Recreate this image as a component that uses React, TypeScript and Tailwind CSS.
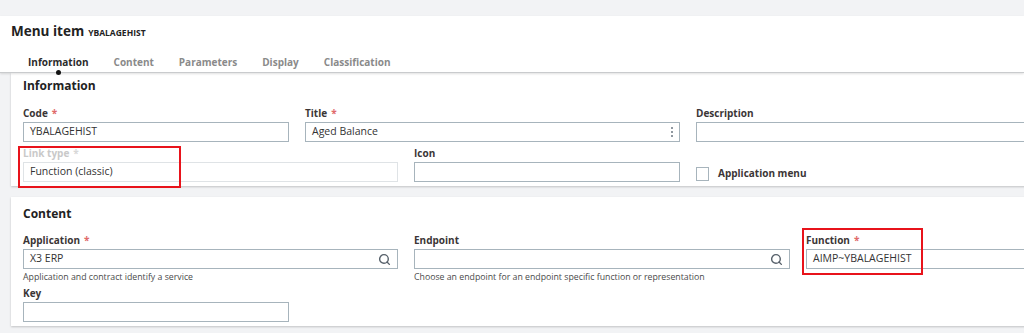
import { Search } from "lucide-react";

const font = { fontFamily: '"Open Sans", "Liberation Sans", sans-serif' };

function Label({ text, required, muted }: { text: string; required?: boolean; muted?: boolean }) {
  return (
    <div className={`h-[18px] text-[10px] font-bold leading-[18px] ${muted ? "text-[#c9c9c9]" : "text-[#3b3636]"}`}>
      {text}
      {required && <span className={`ml-1 ${muted ? "text-[#d8d8d8]" : "text-[#e06a6a]"}`}>*</span>}
    </div>
  );
}

function Input({
  value,
  width,
  muted,
  icon,
}: {
  value?: string;
  width: string;
  muted?: boolean;
  icon?: "search" | "more";
}) {
  return (
    <div
      className={`flex h-[20px] items-center justify-between border px-[6px] text-[10.5px] text-[#333] ${width} ${
        muted ? "border-[#dfe3e6]" : "border-[#a7b4bc]"
      }`}
    >
      <span>{value}</span>
      {icon === "search" && <Search size={13} strokeWidth={2.6} className="text-[#56606a]" />}
      {icon === "more" && (
        <span className="flex flex-col gap-[2px]">
          <span className="h-[2px] w-[2px] rounded-full bg-[#6b7680]" />
          <span className="h-[2px] w-[2px] rounded-full bg-[#6b7680]" />
          <span className="h-[2px] w-[2px] rounded-full bg-[#6b7680]" />
        </span>
      )}
    </div>
  );
}

export default function App() {
  const tabs = ["Information", "Content", "Parameters", "Display", "Classification"];

  return (
    <div style={font} className="relative h-[333px] w-[1024px] overflow-hidden bg-[#f2f3f5]">
      <div className="h-[16px]" />

      <header className="relative z-10 h-[57px] border-b border-[#c9cbcd] bg-white shadow-[0_1px_2px_rgba(0,0,0,0.12)]">
        <div className="flex items-baseline gap-[4px] pl-[11px] pt-[5px]">
          <span className="text-[13.5px] font-bold text-[#222]">Menu item</span>
          <span className="text-[8.5px] font-bold text-[#222]">YBALAGEHIST</span>
        </div>
        <nav className="mt-[14px] flex gap-[25px] pl-[28px]">
          {tabs.map((t, i) => (
            <span key={t} className={`text-[10px] font-bold ${i === 0 ? "text-[#2b2b2b]" : "text-[#8a8a8a]"}`}>
              {t}
            </span>
          ))}
        </nav>
        <span className="absolute bottom-[-3px] left-[56px] h-[5px] w-[5px] rounded-full bg-[#111]" />
      </header>

      <section className="ml-[11px] mr-[-40px] bg-white px-[12px] pb-[4px] shadow-[0_1px_2px_rgba(0,0,0,0.2)]">
        <h2 className="pt-[4px] text-[12px] font-bold leading-[18px] text-[#222]">Information</h2>
        <div className="mt-[9px] flex">
          <div>
            <Label text="Code" required />
            <Input value="YBALAGEHIST" width="w-[266px]" />
          </div>
          <div className="ml-[16px]">
            <Label text="Title" required />
            <Input value="Aged Balance" width="w-[375px]" icon="more" />
          </div>
          <div className="ml-[16px]">
            <Label text="Description" />
            <Input width="w-[400px]" />
          </div>
        </div>
        <div className="mt-[2px] flex">
          <div>
            <Label text="Link type" required muted />
            <Input value="Function (classic)" width="w-[375px]" muted />
          </div>
          <div className="ml-[16px]">
            <Label text="Icon" />
            <Input width="w-[266px]" />
          </div>
          <div className="ml-[16px] flex items-end pb-[1px]">
            <div className="flex items-center gap-[9px]">
              <span className="h-[14px] w-[13px] border border-[#a7b4bc] bg-white" />
              <span className="text-[10px] font-bold text-[#3b3636]">Application menu</span>
            </div>
          </div>
        </div>
      </section>

      <section className="ml-[11px] mr-[-40px] mt-[11px] bg-white px-[12px] pb-[4px] shadow-[0_1px_2px_rgba(0,0,0,0.2)]">
        <h2 className="pt-[8px] text-[12px] font-bold leading-[18px] text-[#222]">Content</h2>
        <div className="mt-[8px] flex">
          <div>
            <Label text="Application" required />
            <Input value="X3 ERP" width="w-[375px]" icon="search" />
            <div className="mt-[1px] text-[8.75px] leading-[14px] text-[#4a4a4a]">
              Application and contract identify a service
            </div>
          </div>
          <div className="ml-[16px]">
            <Label text="Endpoint" />
            <Input width="w-[376px]" icon="search" />
            <div className="mt-[1px] text-[8.75px] leading-[14px] text-[#4a4a4a]">
              Choose an endpoint for an endpoint specific function or representation
            </div>
          </div>
          <div className="ml-[16px]">
            <Label text="Function" required />
            <Input value="AIMP~YBALAGEHIST" width="w-[376px]" />
          </div>
        </div>
        <div>
          <Label text="Key" />
          <Input width="w-[266px]" />
        </div>
      </section>

      <div className="absolute left-[18px] top-[146px] h-[42px] w-[163px] border-2 border-[#e8131b]" />
      <div className="absolute left-[802px] top-[228px] h-[47px] w-[121px] border-2 border-[#e8131b]" />
    </div>
  );
}
